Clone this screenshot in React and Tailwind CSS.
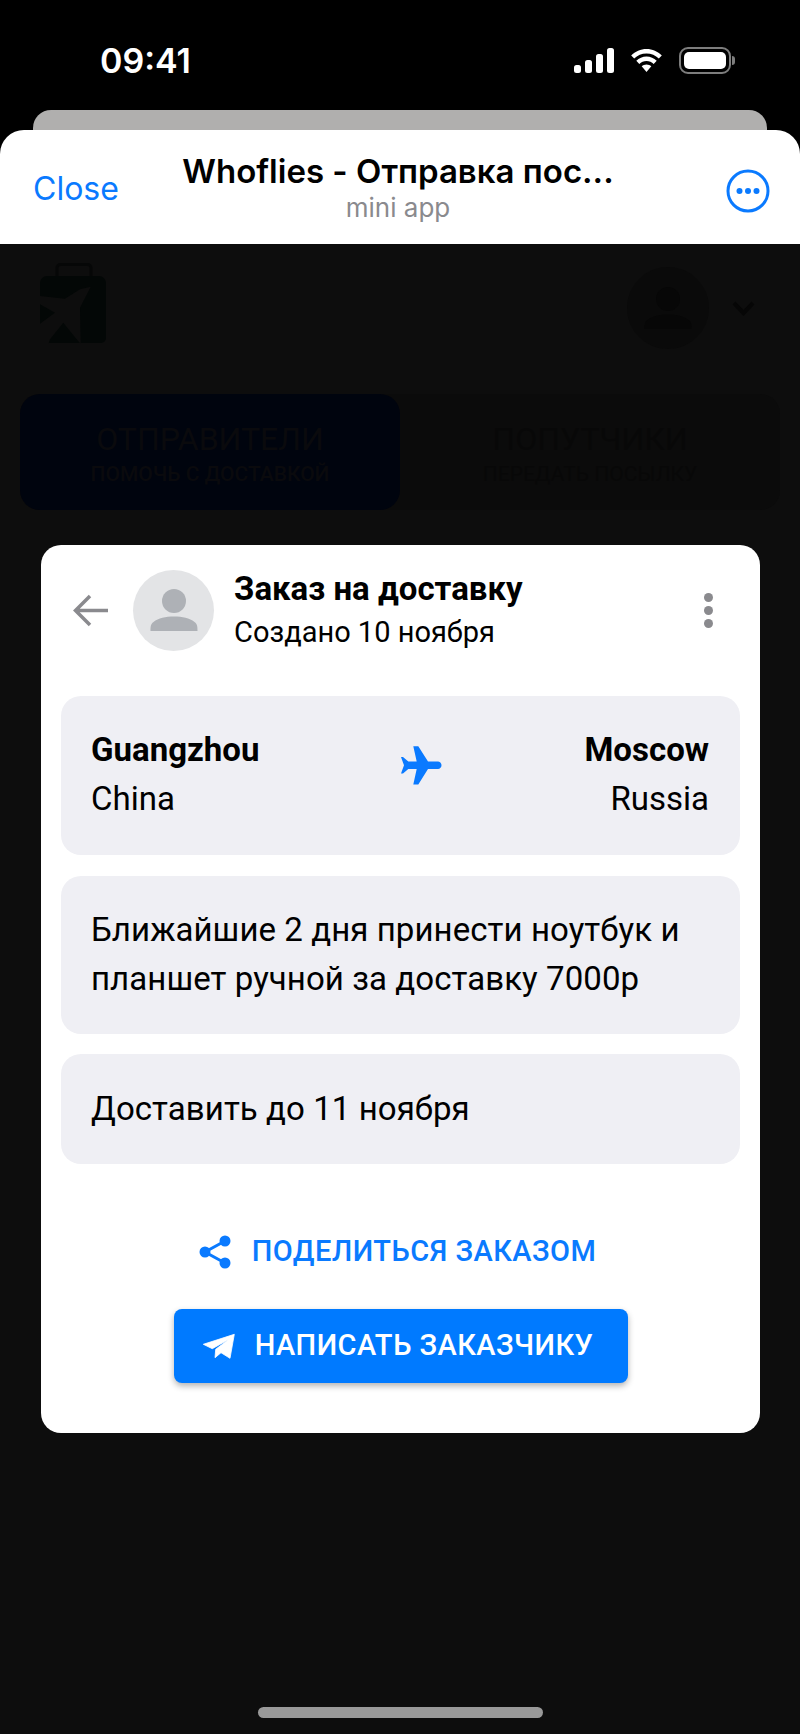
import React from "react";

const Icons = {
  Signal: () => (
    <svg width="40" height="25" viewBox="0 0 40 25" fill="white">
      <rect x="0" y="17" width="7" height="8" rx="2.500" />
      <rect x="11" y="12" width="7" height="13" rx="2.500" />
      <rect x="22" y="6" width="7" height="19" rx="2.500" />
      <rect x="33" y="0" width="7" height="25" rx="2.500" />
    </svg>
  ),
  Wifi: () => (
    <svg width="35" height="25" viewBox="0 0 35 25" fill="white">
      <path d="M17.5 5.5c4.8 0 9.1 1.9 12.3 5l3-3.1C28.800 3.500 23.400 1 17.500 1S6.200 3.500 2.200 7.400l3 3.100c3.200-3.100 7.500-5 12.300-5z" />
      <path d="M17.500 13c2.800 0 5.300 1.100 7.200 2.900l3-3.100c-2.700-2.600-6.300-4.200-10.200-4.200s-7.500 1.600-10.200 4.200l3 3.100c1.900-1.800 4.400-2.900 7.200-2.900z" />
      <path d="M17.500 16.400c-1.900 0-3.500.7-4.800 1.900l4.800 5.700 4.800-5.700c-1.300-1.200-2.900-1.900-4.800-1.900z" />
    </svg>
  ),
  Battery: () => (
    <div className="flex items-center">
      <div className="w-[52px] h-[27px] rounded-[9px] border-2 border-[#7d7d7d] p-[3px]">
        <div className="w-full h-full rounded-[5px] bg-white" />
      </div>
      <div className="w-[3px] h-[9px] ml-[1px] rounded-r-full bg-[#7d7d7d]" />
    </div>
  ),
  More: () => (
    <svg width="44" height="44" viewBox="0 0 44 44" fill="none">
      <circle cx="22" cy="22" r="20" stroke="#0a7aff" strokeWidth="3" />
      <circle cx="13.500" cy="22" r="3" fill="#0a7aff" />
      <circle cx="22" cy="22" r="3" fill="#0a7aff" />
      <circle cx="30.500" cy="22" r="3" fill="#0a7aff" />
    </svg>
  ),
  Suitcase: () => (
    <svg className="-mt-[6px]" width="66" height="81" viewBox="0 0 66 81" fill="none">
      <path d="M17 13V5a3.500 3.500 0 0 1 3.500-3.500h27A3.500 3.500 0 0 1 51 5v8" stroke="#060707" strokeWidth="3" />
      <path d="M0 20a7 7 0 0 1 7-7h52a7 7 0 0 1 7 7v55a5 5 0 0 1-5 5H5a5 5 0 0 1-5-5z" fill="#030706" />
      <path d="M50.700 23.700 40 44.700l.7 36.300-4-4.700-13.400-16.600L10 76.300 8.300 81H0V60.700l15-11-15-8.400V33l25 2.700 15-9.400z" fill="#0d0d0d" />
    </svg>
  ),
  Plane: () => (
    <svg className="mb-[16px]" width="43" height="39" viewBox="0 0 43 39" fill="#0a7aff">
      <path d="M41.500 19.300c0 2-1.500 3.700-3.500 3.700H28l-9.700 15.500h-5L16.700 23H8.300L3 27.500H1l3-8.200L1 11h2l5.300 4.500h8.400L13.300.3h5L28 15.500h10c2 0 3.500 1.800 3.500 3.800z" />
    </svg>
  ),
  Share: () => (
    <svg width="32" height="34" viewBox="0 0 32 34" fill="#0a7aff">
      <circle cx="26" cy="6" r="5.500" />
      <circle cx="6" cy="17" r="5.500" />
      <circle cx="26" cy="28" r="5.500" />
      <path d="M26 6 6 17l20 11" stroke="#0a7aff" strokeWidth="3" fill="none" />
    </svg>
  ),
  Telegram: () => (
    <svg width="32" height="26" viewBox="0 0 32 26" fill="white" stroke="white" strokeWidth="0.8" strokeLinejoin="round">
      <path d="M31.300 1.300.3 11.300l9 4.400L26 6.300 12.700 16.300l-.7 8.400 6-5 9 5.600z" />
    </svg>
  ),
};

function Person({ size, bg, fg }) {
  return (
    <div className={`${bg} ${size} rounded-full flex items-center justify-center shrink-0`}>
      <svg width="48" height="42" viewBox="0 0 48 42" fill={fg}>
        <ellipse cx="24" cy="12" rx="12" ry="12" />
        <path d="M.5 42c0-4 0-7 3-9 5-4 12-5.500 20.500-5.500S39.500 29 44.500 33c3 2 3 5 3 9z" />
      </svg>
    </div>
  );
}

function BackgroundPage() {
  return (
    <div className="flex-1 bg-[#0d0d0d] px-[20px] pt-[18px]">
      <div className="flex items-center justify-between pl-[20px] pr-[25px] h-[88px]">
        <Icons.Suitcase />
        <div className="flex items-center gap-[23px] mt-[4px]">
          <Person size="w-[82px] h-[82px]" bg="bg-[#0a0a0a]" fg="#070707" />
          <svg width="23" height="15" viewBox="0 0 23 15" fill="none">
            <path d="M2 2l9.500 10L21 2" stroke="#060606" strokeWidth="4" />
          </svg>
        </div>
      </div>
      <div className="mt-[44px] flex h-[116px] rounded-[20px] bg-[#0b0b0b]">
        <div className="w-[380px] rounded-[20px] bg-[#00040e] flex flex-col items-center justify-center">
          <div className="text-[32px] leading-[40px] text-[#0a0a0d] mt-[2px]">ОТПРАВИТЕЛИ</div>
          <div className="text-[21px] leading-[28px] text-[#0a0a0d] font-medium mt-[1px]">ПОМОЧЬ С ДОСТАВКОЙ</div>
        </div>
        <div className="flex-1 flex flex-col items-center justify-center">
          <div className="text-[32px] leading-[40px] text-[#080808] mt-[2px]">ПОПУТЧИКИ</div>
          <div className="text-[21px] leading-[28px] text-[#080808] mt-[1px]">ПЕРЕДАТЬ ПОСЫЛКУ</div>
        </div>
      </div>
    </div>
  );
}

function OrderModal() {
  return (
    <div className="absolute left-[41px] top-[545px] w-[719px] h-[888px] bg-white rounded-[20px] px-[20px]">
      <div className="flex items-center h-[106px] mt-[12px]">
        <svg className="ml-[12px] mr-[25px] shrink-0" width="35" height="33" viewBox="0 0 35 33" fill="none">
          <path d="M17 2 2.500 16.500 17 31M3 16.500h32" stroke="#8a8a8e" strokeWidth="3.500" />
        </svg>
        <Person size="w-[81px] h-[81px]" bg="bg-[#e3e4e6]" fg="#aeb1b6" />
        <div className="ml-[20px] flex-1 text-black">
          <div className="text-[33px] leading-[40px] font-bold">Заказ на доставку</div>
          <div className="text-[29px] leading-[40px] mt-[3px]">Создано 10 ноября</div>
        </div>
        <div className="flex flex-col gap-[4px] mr-[27px]">
          <div className="w-[9px] h-[9px] rounded-full bg-[#8a8a8e]" />
          <div className="w-[9px] h-[9px] rounded-full bg-[#8a8a8e]" />
          <div className="w-[9px] h-[9px] rounded-full bg-[#8a8a8e]" />
        </div>
      </div>

      <div className="mt-[33px] h-[159px] rounded-[20px] bg-[#efeff4] pl-[30px] pr-[31px] pb-[4px] flex items-center justify-between text-[33px] leading-[49px] text-black">
        <div>
          <div className="font-bold">Guangzhou</div>
          <div>China</div>
        </div>
        <Icons.Plane />
        <div className="text-right">
          <div className="font-bold">Moscow</div>
          <div>Russia</div>
        </div>
      </div>

      <div className="mt-[21px] h-[158px] rounded-[20px] bg-[#efeff4] px-[30px] flex items-center text-[33px] leading-[49px] tracking-[0.07px] text-black">
        <p className="-mt-[2px]">Ближайшие 2 дня принести ноутбук и<br />планшет ручной за доставку 7000р</p>
      </div>

      <div className="mt-[20px] h-[110px] rounded-[20px] bg-[#efeff4] px-[30px] flex items-center text-[33px] tracking-[0.07px] text-black">
        Доставить до 11 ноября
      </div>

      <div className="mt-[68px] flex items-center justify-center gap-[21px] h-[40px] pr-[6px] text-[#0a7aff] text-[29px] font-medium tracking-[0.45px]">
        <Icons.Share />
        <span>ПОДЕЛИТЬСЯ ЗАКАЗОМ</span>
      </div>

      <div className="mt-[37px] mx-auto w-[454px] h-[74px] pr-[5px] rounded-[8px] bg-[#007aff] shadow-[0_3px_6px_rgba(0,0,0,0.3)] flex items-center justify-center gap-[20px] text-white text-[29px] font-medium tracking-[0.45px]">
        <Icons.Telegram />
        <span>НАПИСАТЬ ЗАКАЗЧИКУ</span>
      </div>
    </div>
  );
}

export default function App() {
  return (
    <div className="relative w-[800px] h-[1734px] bg-black overflow-hidden flex flex-col font-['Roboto',sans-serif]">
      <div className="h-[110px] shrink-0 flex items-center justify-between pl-[100px] pr-[65px] pt-[10px]">
        <span className="text-[34px] font-semibold text-white font-['Inter',sans-serif]">09:41</span>
        <div className="flex items-center gap-[15px]">
          <Icons.Signal />
          <Icons.Wifi />
          <Icons.Battery />
        </div>
      </div>

      <div className="shrink-0 mx-[33px] h-[40px] rounded-t-[18px] bg-[#b0afae]" />

      <div className="shrink-0 -mt-[20px] h-[114px] rounded-t-[24px] bg-white flex items-center pl-[33px] pr-[30px] font-['Inter',sans-serif]">
        <div className="w-[100px] text-[32px] text-[#0a7aff] mt-[3px]">Close</div>
        <div className="flex-1 flex flex-col items-center">
          <div className="text-[33px] leading-[42px] font-semibold text-black">Whoflies - Отправка пос...</div>
          <div className="text-[26px] leading-[32px] text-[#8a8a8e]">mini app</div>
        </div>
        <div className="w-[107px] flex justify-end mt-[8px]">
          <Icons.More />
        </div>
      </div>

      <BackgroundPage />
      <OrderModal />

      <div className="absolute left-[258px] top-[1707px] w-[285px] h-[11px] rounded-full bg-[#999999]" />
    </div>
  );
}
